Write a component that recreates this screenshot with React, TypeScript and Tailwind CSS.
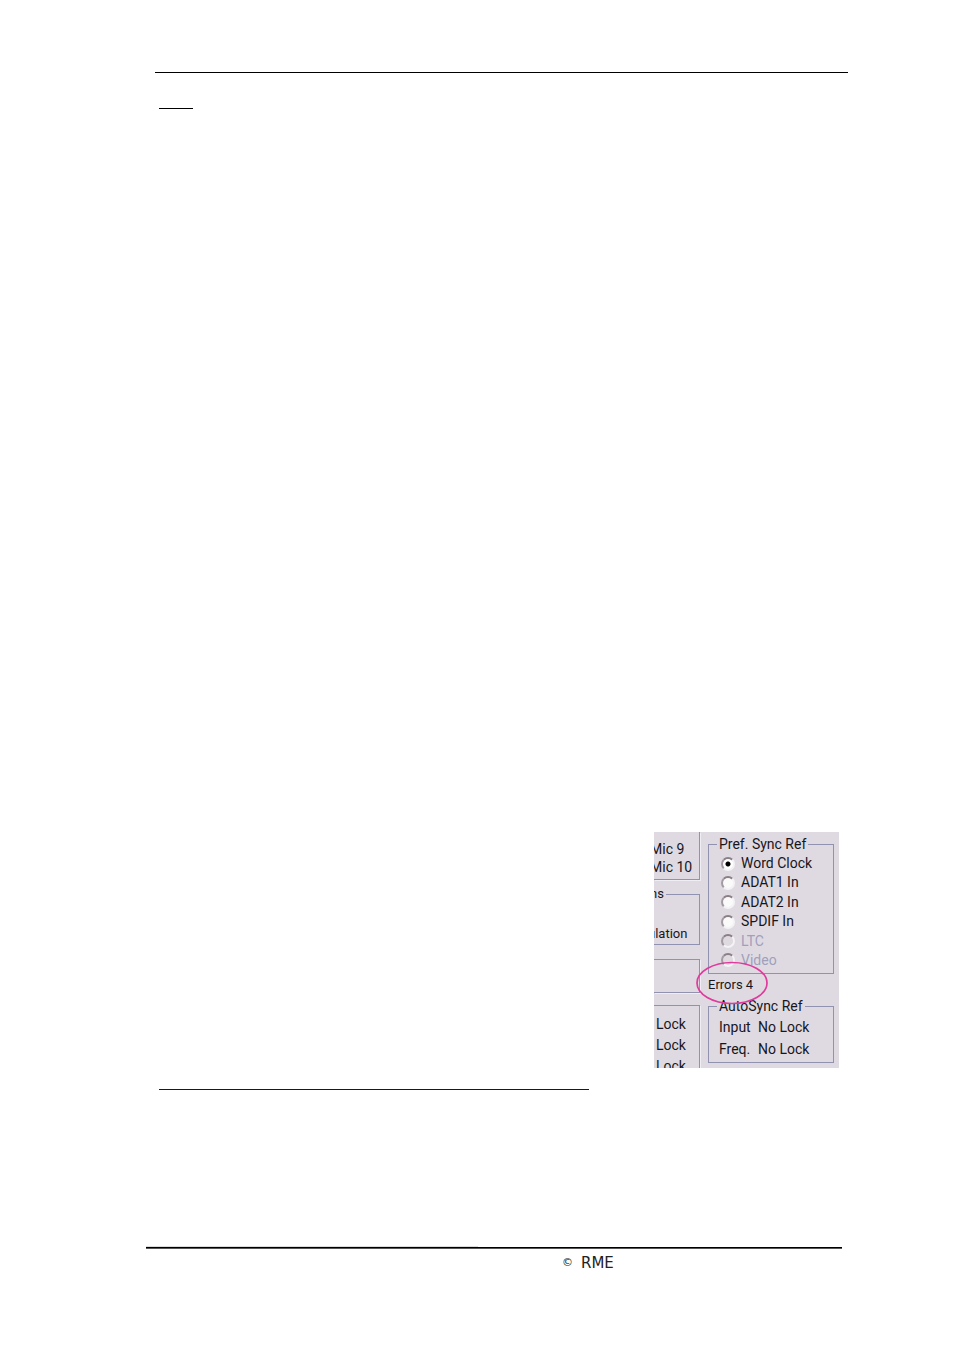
import * as React from 'react';
import { useState } from 'react';

const SOURCES = [
  { id: 'word', label: 'Word Clock', disabled: false },
  { id: 'adat1', label: 'ADAT1 In', disabled: false },
  { id: 'adat2', label: 'ADAT2 In', disabled: false },
  { id: 'spdif', label: 'SPDIF In', disabled: false },
  { id: 'ltc', label: 'LTC', disabled: true },
  { id: 'video', label: 'Video', disabled: true },
];

const BOX = 'border border-[#9191b0] shadow-[1px_1px_0_#f0eef5]';

const SyncRef: React.FC = () => {
  const [source, setSource] = useState('word');

  return (
    <fieldset className="min-w-0 h-[140px] border border-[#9191b0] pl-3">
      <legend className="h-5 leading-5 px-0.5 -ml-1">Pref. Sync Ref</legend>
      <div className="h-[116px] flex flex-col justify-between">
        {SOURCES.map((s) => (
          <label
            key={s.id}
            className={`h-[19px] flex items-center gap-1.5 whitespace-nowrap ${s.disabled ? 'text-[#a09fbc]' : ''}`}
          >
            <input
              type="radio"
              name="sync"
              checked={source === s.id}
              disabled={s.disabled}
              onChange={() => setSource(s.id)}
              className="appearance-none size-3.5 shrink-0 rounded-full border-2 border-t-[#8b7f86] border-l-[#a39aa2] border-b-[#f4f2f4] border-r-[#f4f2f4] bg-[#fafafa] disabled:bg-[#dfd9e0] checked:bg-[radial-gradient(circle,#000_2px,#fff_3px)]"
            />
            {s.label}
          </label>
        ))}
      </div>
    </fieldset>
  );
};

const SettingsPanel: React.FC = () => (
  <section className="relative w-[185px] h-[236px] shrink-0 overflow-hidden bg-[#dfdae2] font-[Roboto,sans-serif] text-[14px] text-[#18161c] flex gap-2">
    {/* right edge of the neighbouring groups */}
    <div className="w-[46px] shrink-0 whitespace-nowrap">
      <div className={`h-12 border-t-0! border-l-0! pt-2 leading-[18px] ${BOX}`}>
        <p className="-ml-1">Mic 9</p>
        <p className="-ml-1">Mic 10</p>
      </div>
      <fieldset className="min-w-0 mt-1 h-[61px] border border-l-0 border-[#9191b0]">
        <legend className="h-5 leading-5 pr-0.5 -ml-1 text-[13px]">ns</legend>
        <p className="mt-5 leading-5 text-[13px] -ml-1.5">ulation</p>
      </fieldset>
      <div className={`mt-3.5 h-[34px] border-l-0! ${BOX}`} />
      <div className={`mt-3 h-20 border-l-0! pt-2 leading-[21px] pl-0.5 ${BOX}`}>
        <p>Lock</p>
        <p>Lock</p>
        <p>Lock</p>
      </div>
    </div>

    <div className="w-[126px] shrink-0 pt-0.5">
      <SyncRef />
      <p className="h-[22px] leading-[22px] text-[13px]">Errors 4</p>
      <fieldset className="min-w-0 h-[67px] border border-[#9191b0] pl-2.5">
        <legend className="h-5 leading-5 px-0.5 -ml-0.5">AutoSync Ref</legend>
        <dl className="grid grid-cols-[39px_1fr] leading-[22px] whitespace-nowrap">
          <dt>Input</dt>
          <dd>No Lock</dd>
          <dt>Freq.</dt>
          <dd>No Lock</dd>
        </dl>
      </fieldset>
    </div>

    <svg className="absolute left-[41px] top-[129px]" width="74" height="44" viewBox="0 0 74 44" fill="none">
      <ellipse cx="37" cy="22" rx="35" ry="20.5" stroke="#e03a9c" strokeWidth="1.7" />
    </svg>
  </section>
);

const App: React.FC = () => (
  <div className="min-h-screen bg-white pt-[72px] pb-20">
    <hr className="ml-[155px] mr-[106px] border-t border-black" />

    <main className="ml-[159px] mr-[115px] pt-[35px]">
      <hr className="w-[34px] border-t border-black" />
      <div className="mt-[723px] flex justify-end">
        <SettingsPanel />
      </div>
      <hr className="mt-[21px] w-[430px] border-t border-[#0000d8]" />
    </main>

    <footer className="mt-[156px] ml-[146px] mr-28">
      <div className="w-[332px] h-px bg-[#dcdcdc]" />
      <div className="h-0.5 border-t border-black bg-[#555]" />
      <p className="mt-1 pl-[416px] flex items-center gap-2 h-5 font-['DejaVu_Sans',sans-serif] text-[#222]">
        <span className="text-[11px]">©</span>
        <span className="text-[15px]">RME</span>
      </p>
    </footer>
  </div>
);

export default App;
